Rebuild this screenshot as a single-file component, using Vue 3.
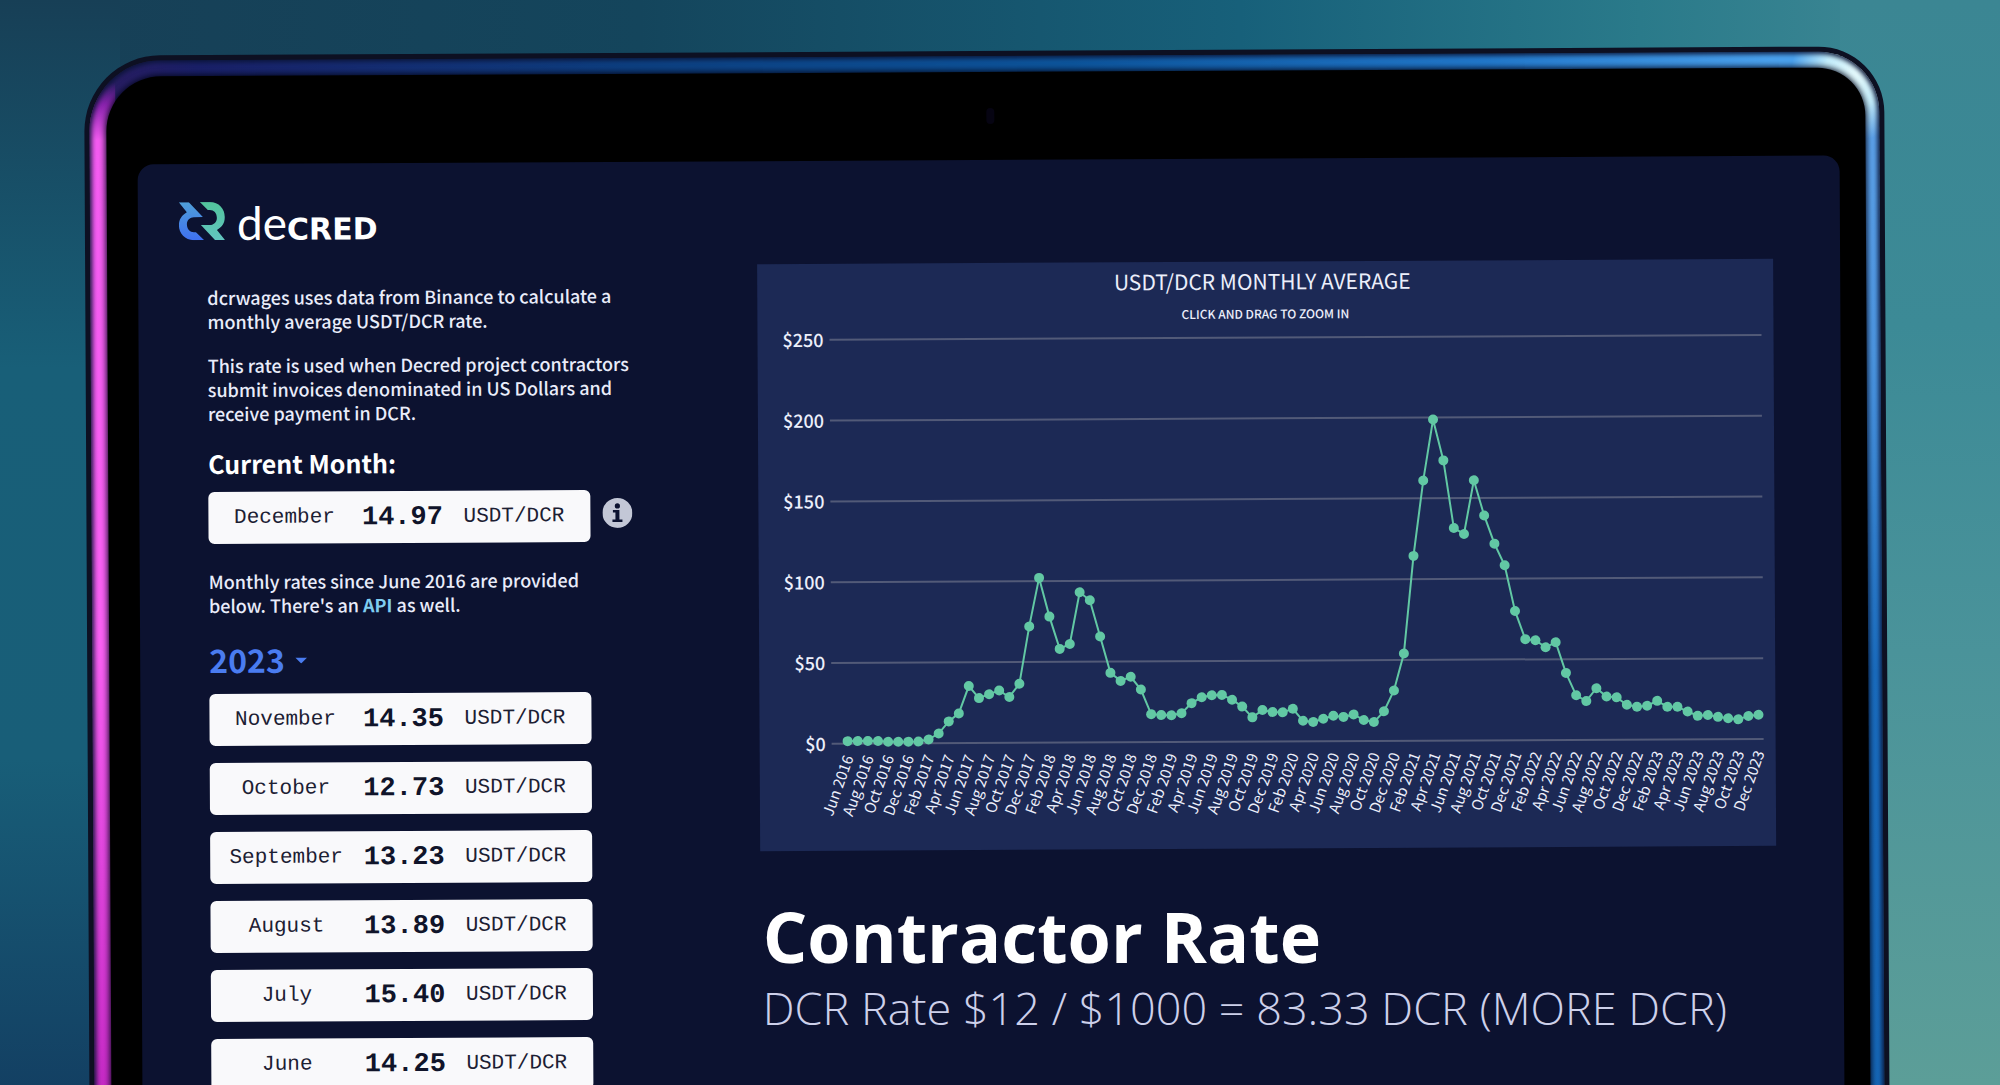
<script setup>
const currentRate = { month: 'December', rate: '14.97' }

const rates = [
  { month: 'November', rate: '14.35' },
  { month: 'October', rate: '12.73' },
  { month: 'September', rate: '13.23' },
  { month: 'August', rate: '13.89' },
  { month: 'July', rate: '15.40' },
  { month: 'June', rate: '14.25' },
]

// Monthly averages, June 2016 to December 2023
const averages = [
  1.6, 1.6, 1.6, 1.6, 1.1, 1.1, 1.1,
  1.1, 2.4, 6, 13.5, 18.4, 35.3, 27.8, 30.2, 32.4, 28.4, 36.5, 72,
  102, 78, 58, 61, 93, 88, 65.5, 43, 38, 40.5, 32.6, 17.3,
  16.7, 16.6, 17.8, 24, 27.6, 28.8, 29, 26, 21.7, 15, 19.5, 18.2,
  18, 20.2, 12.7, 12, 13.9, 15.7, 15, 16.5, 13, 11.7, 18.3, 31.2,
  54, 114.4, 161, 198.7, 173.4, 131.5, 127.8, 161, 139.2, 121.7, 108.3, 80,
  62.5, 61.8, 57.4, 60.5, 41.5, 27.6, 24, 31.9, 26.8, 26.2, 21.6, 20.3,
  20.9, 23.9, 20.2, 20.2, 17.2, 14.5, 15, 13.8, 12.9, 12.2, 14.2, 15,
]

const monthNames = ['Jan', 'Feb', 'Mar', 'Apr', 'May', 'Jun', 'Jul', 'Aug', 'Sep', 'Oct', 'Nov', 'Dec']

const plot = { left: 72, right: 1004, zero: 480, unit: 1.616, first: 88, last: 999 }
const toX = (i) => plot.first + (i * (plot.last - plot.first)) / (averages.length - 1)
const toY = (v) => plot.zero - v * plot.unit

const points = averages.map((v, i) => ({ x: toX(i), y: toY(v) }))
const line = points.map((p) => `${p.x},${p.y}`).join(' ')
const yTicks = [250, 200, 150, 100, 50, 0].map((v) => ({ label: `$${v}`, y: toY(v) }))
const xTicks = averages
  .map((_, i) => {
    const m = i + 5
    return { x: toX(i), label: `${monthNames[m % 12]} ${2016 + Math.floor(m / 12)}` }
  })
  .filter((_, i) => i % 2 === 0)
</script>

<template>
  <div class="stage">
    <div class="device">
      <div class="rim">
        <div class="bezel">
          <div class="camera"></div>
          <div class="screen">
            <header>
              <a class="logo" href="#" aria-label="Decred">
                <svg class="mark" viewBox="0 0 46 38" aria-hidden="true">
                  <defs>
                    <linearGradient id="blue" x1="0" y1="0" x2="0" y2="1">
                      <stop offset="0" stop-color="#4f9fd8" />
                      <stop offset="1" stop-color="#3f70f0" />
                    </linearGradient>
                    <linearGradient id="green" x1="0" y1="0" x2="0" y2="1">
                      <stop offset="0" stop-color="#52c49c" />
                      <stop offset="1" stop-color="#62c4c0" />
                    </linearGradient>
                  </defs>
                  <path fill="url(#blue)" d="M0 0H10L24 15H15C11 15 8 18 8 22C8 27 11 30 15 30H17L25 38H15C6 38 0 31 0 23C0 17 3 13 8 10Z" />
                  <path fill="url(#green)" d="M46 38H36L22 23H31C35 23 38 20 38 16C38 11 35 8 31 8H29L21 0H31C40 0 46 7 46 15C46 21 43 25 38 28Z" />
                </svg>
                <span class="wordmark"><span class="de">de</span><span class="cred">CRED</span></span>
              </a>
            </header>

            <main>
              <section class="rates">
                <p>dcrwages uses data from Binance to calculate a monthly average USDT/DCR rate.</p>
                <p>This rate is used when Decred project contractors submit invoices denominated in US Dollars and receive payment in DCR.</p>

                <h2 id="current">Current Month:</h2>
                <div class="current">
                  <table aria-labelledby="current">
                    <tbody>
                      <tr>
                        <th scope="row">{{ currentRate.month }}</th>
                        <td class="value">{{ currentRate.rate }}</td>
                        <td>USDT/DCR</td>
                      </tr>
                    </tbody>
                  </table>
                  <button class="info" type="button" aria-label="About the current rate">
                    <svg viewBox="0 0 30 30" aria-hidden="true">
                      <circle cx="15" cy="15" r="15" />
                      <circle cx="15" cy="8" r="2.6" />
                      <path d="M10.500 12H17V21.500H20V24H10V21.500H13V14.500H10.500Z" />
                    </svg>
                  </button>
                </div>

                <p class="note">Monthly rates since June 2016 are provided below. There's an <a href="#">API</a> as well.</p>

                <div class="year">
                  <select aria-label="Year">
                    <option>2023</option>
                    <option>2022</option>
                    <option>2021</option>
                    <option>2020</option>
                    <option>2019</option>
                    <option>2018</option>
                    <option>2017</option>
                    <option>2016</option>
                  </select>
                  <svg viewBox="0 0 12 6" aria-hidden="true"><path d="M0 0H12L6 6Z" fill="#4a7cf0" /></svg>
                </div>

                <table aria-label="Rates in 2023">
                  <tbody>
                    <tr v-for="r in rates" :key="r.month">
                      <th scope="row">{{ r.month }}</th>
                      <td class="value">{{ r.rate }}</td>
                      <td>USDT/DCR</td>
                    </tr>
                  </tbody>
                </table>
              </section>

              <section class="detail">
                <svg class="chart" viewBox="0 0 1016 587" role="img" aria-label="USDT/DCR monthly average">
                  <text class="title" x="505" y="28">USDT/DCR MONTHLY AVERAGE</text>
                  <text class="subtitle" x="508" y="57">CLICK AND DRAG TO ZOOM IN</text>
                  <g v-for="t in yTicks" :key="t.label">
                    <line :x1="plot.left" :x2="plot.right" :y1="t.y" :y2="t.y" />
                    <text class="ytick" x="66" :y="t.y + 7">{{ t.label }}</text>
                  </g>
                  <polyline :points="line" />
                  <circle v-for="(p, i) in points" :key="i" :cx="p.x" :cy="p.y" r="5" />
                  <text
                    v-for="t in xTicks"
                    :key="t.label"
                    class="xtick"
                    :transform="`translate(${t.x + 6} 494) rotate(-70)`"
                  >{{ t.label }}</text>
                </svg>

                <div class="caption">
                  <h1>Contractor Rate</h1>
                  <p>DCR Rate $12 / $1000 = 83.33 DCR (MORE DCR)</p>
                </div>
              </section>
            </main>
          </div>
        </div>
      </div>
    </div>
  </div>
</template>

<style>
body {
  margin: 0;
}
</style>

<style scoped>
.stage {
  box-sizing: border-box;
  height: 100vh;
  overflow: hidden;
  padding: 51px 5.8% 0 4.2%;
  background:
    linear-gradient(180deg, #173f56 0, #185f78 34%, #185e78 70%, #134063 100%) left / 6% 100% no-repeat,
    linear-gradient(180deg, #3b8693 0, #3c8a96 30%, #4a939a 60%, #5c9e98 100%) right / 8% 100% no-repeat,
    linear-gradient(90deg, #173f56 0, #14455c 32%, #17607a 62%, #2a7a8a 82%, #3b8693 94%);
}

.device {
  min-height: 1200px;
  padding: 5px;
  box-sizing: border-box;
  border-radius: 76px 66px 0 0;
  background: #0d1022;
  transform: rotate(-0.3deg);
  transform-origin: top center;
}

.rim {
  min-height: 1200px;
  padding: 16px 14px 0 17px;
  border-radius: 71px 61px 0 0;
  background:
    radial-gradient(circle at calc(100% - 22px) 22px, #e8fdff 0, #c4effd 32px, transparent 66px),
    linear-gradient(180deg, transparent 0, transparent 22px, #8a23ae 44px, #f55cf2 80px, #fa60f4 45%, #c428c4 80%, #b01cb0 100%) left / 26px 100% no-repeat,
    linear-gradient(180deg, transparent 0, transparent 22px, #62a8f0 50px, #4f9be8 300px, #1b70c4 620px, #1465b4 100%) right / 26px 100% no-repeat,
    linear-gradient(90deg, #2b1c60 0, #1a2068 6%, #0d3f80 30%, #0d559c 55%, #2279cc 78%, #4ba2ee 94%);
  box-shadow: inset 0 0 5px 2px #0a1436;
}

.bezel {
  min-height: 1200px;
  padding: 88px 26px 0 31px;
  border-radius: 55px 48px 0 0;
  background: #000;
  box-shadow: 0 0 6px 1px #03061a;
  position: relative;
}

.camera {
  position: absolute;
  top: 36px;
  left: 50%;
  width: 8px;
  height: 16px;
  border-radius: 4px;
  background: #060412;
}

.screen {
  min-height: 1100px;
  padding: 38px 67px 0 69px;
  border-radius: 16px 16px 0 0;
  background: #0c1230;
  color: #e9ecfa;
  font-family: "Noto Sans CJK SC", "Noto Sans", sans-serif;
  font-size: 18px;
  line-height: 24px;
  font-weight: 500;
}

header {
  margin-left: -28px;
}

.logo {
  display: inline-flex;
  gap: 12px;
  height: 38px;
  color: #fff;
  text-decoration: none;
}

.mark {
  width: 46px;
  height: 38px;
}

.wordmark {
  line-height: 42px;
}

.de {
  font-family: Lato, sans-serif;
  font-size: 46px;
  font-weight: 400;
}

.cred {
  font-family: "DejaVu Sans", sans-serif;
  font-size: 30px;
  font-weight: 700;
}

main {
  display: flex;
  gap: 126px;
  padding-top: 23px;
}

.rates {
  flex: 0 0 424px;
  padding-top: 18px;
}

.rates p {
  margin: 0 0 20px;
}

.rates h2 {
  margin: 0 0 11px;
  font-size: 25px;
  line-height: 36px;
  font-weight: 700;
  color: #fff;
}

.current {
  display: flex;
  align-items: center;
  gap: 12px;
  margin-bottom: 25px;
}

.info {
  width: 30px;
  height: 30px;
  margin-bottom: 6px;
  padding: 0;
  border: 0;
  background: none;
}

.info svg {
  display: block;
  fill: #0c1230;
}

.rates .note {
  width: 400px;
  margin-bottom: 18px;
}

.note a {
  color: #7fcdf0;
  font-weight: 700;
  text-decoration: none;
}

.year {
  display: flex;
  align-items: center;
  gap: 10px;
  margin-bottom: 11px;
}

.year select {
  appearance: none;
  padding: 0;
  border: 0;
  background: none;
  color: #4a7cf0;
  font: 700 32px/48px "Noto Sans CJK SC", "Noto Sans", sans-serif;
}

.year svg {
  width: 12px;
  height: 6px;
  padding-top: 4px;
}

table,
tbody {
  display: flex;
  flex-direction: column;
  gap: 17px;
}

tr {
  display: grid;
  grid-template-columns: 152px 84px 139px;
  align-items: center;
  width: 382px;
  height: 52px;
  border-radius: 6px;
  background: #f9f9fb;
  color: #1c2033;
  font-family: "Liberation Mono", monospace;
  font-size: 21px;
  text-align: center;
}

th,
td {
  padding: 0;
  font-weight: 400;
}

.value {
  color: #10142a;
  font-size: 27px;
  font-weight: 700;
}

.detail {
  flex: 1;
  min-width: 0;
}

.chart {
  display: block;
  width: 100%;
  background: #1c2955;
  fill: #eceffb;
}

.title {
  font-size: 21px;
  font-weight: 400;
  text-anchor: middle;
}

.subtitle {
  font-size: 12px;
  text-anchor: middle;
}

.ytick {
  font-size: 18px;
  text-anchor: end;
}

.xtick {
  font-size: 15px;
  font-weight: 400;
  text-anchor: end;
}

line {
  stroke: #525a78;
  stroke-width: 2;
}

polyline {
  fill: none;
  stroke: #62c8a4;
  stroke-width: 2;
}

circle {
  fill: #62c8a4;
}

.info circle {
  fill: #0c1230;
}

.info circle:first-child {
  fill: #c3c7d6;
}

.caption {
  margin: 39px 0 0 2px;
  font-family: "Open Sans", "Noto Sans", sans-serif;
  white-space: nowrap;
  transform: rotate(0.3deg);
}

.caption h1 {
  margin: 0;
  color: #fff;
  font-size: 70px;
  line-height: 96px;
  font-weight: 700;
}

.caption p {
  margin: 0;
  color: #cdd0ea;
  font-size: 45px;
  line-height: 48px;
  font-weight: 300;
}
</style>
